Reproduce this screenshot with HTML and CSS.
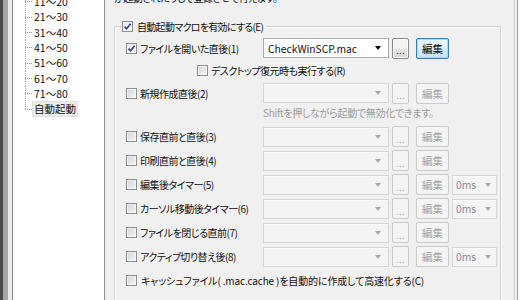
FILE: index.html
```html
<!DOCTYPE html>
<html lang="ja">
<head>
<meta charset="utf-8">
<title>自動起動</title>
<link rel="stylesheet" href="styles.css">
</head>
<body>
<div class="win">
  <div class="edge"></div>
  <div class="tree">
    <ul class="tree-list">
      <li class="ti"><span class="lbl">11～20</span></li>
      <li class="ti"><span class="lbl">21～30</span></li>
      <li class="ti"><span class="lbl">31～40</span></li>
      <li class="ti"><span class="lbl">41～50</span></li>
      <li class="ti"><span class="lbl">51～60</span></li>
      <li class="ti"><span class="lbl">61～70</span></li>
      <li class="ti"><span class="lbl">71～80</span></li>
      <li class="ti last"><span class="lbl sel">自動起動</span></li>
    </ul>
  </div>
  <div class="main">
    <div class="desc">が起動されたりして登録させて行えます。</div>
    <div class="group">
      <div class="legend"><span class="cb on"><svg viewBox="0 0 9 9" width="9" height="9"><path d="M1.5 4.6 L3.6 6.8 L7.6 1.8" /></svg></span><span>自動起動マクロを有効にする(E)</span></div>

      <div class="row r1">
        <div class="chk"><span class="cb on"><svg viewBox="0 0 9 9" width="9" height="9"><path d="M1.5 4.6 L3.6 6.8 L7.6 1.8" /></svg></span><span>ファイルを開いた直後(1)</span></div>
        <div class="combo en"><span class="ctext">CheckWinSCP.mac</span><span class="arr"></span></div>
        <div class="btn dots en">...</div>
        <div class="btn edit focus">編集</div>
      </div>

      <div class="row r2">
        <div class="chk sub"><span class="cb"></span><span>デスクトップ復元時も実行する(R)</span></div>
      </div>

      <div class="row">
        <div class="chk"><span class="cb"></span><span>新規作成直後(2)</span></div>
        <div class="combo"><span class="ctext"></span><span class="arr"></span></div>
        <div class="btn dots">...</div>
        <div class="btn edit">編集</div>
      </div>

      <div class="hint">Shiftを押しながら起動で無効化できます。</div>

      <div class="row">
        <div class="chk"><span class="cb"></span><span>保存直前と直後(3)</span></div>
        <div class="combo"><span class="ctext"></span><span class="arr"></span></div>
        <div class="btn dots">...</div>
        <div class="btn edit">編集</div>
      </div>

      <div class="row">
        <div class="chk"><span class="cb"></span><span>印刷直前と直後(4)</span></div>
        <div class="combo"><span class="ctext"></span><span class="arr"></span></div>
        <div class="btn dots">...</div>
        <div class="btn edit">編集</div>
      </div>

      <div class="row">
        <div class="chk"><span class="cb"></span><span>編集後タイマー(5)</span></div>
        <div class="combo"><span class="ctext"></span><span class="arr"></span></div>
        <div class="btn dots">...</div>
        <div class="btn edit">編集</div>
        <div class="combo ms"><span class="ctext">0ms</span><span class="arr"></span></div>
      </div>

      <div class="row">
        <div class="chk"><span class="cb"></span><span>カーソル移動後タイマー(6)</span></div>
        <div class="combo"><span class="ctext"></span><span class="arr"></span></div>
        <div class="btn dots">...</div>
        <div class="btn edit">編集</div>
        <div class="combo ms"><span class="ctext">0ms</span><span class="arr"></span></div>
      </div>

      <div class="row">
        <div class="chk"><span class="cb"></span><span>ファイルを閉じる直前(7)</span></div>
        <div class="combo"><span class="ctext"></span><span class="arr"></span></div>
        <div class="btn dots">...</div>
        <div class="btn edit">編集</div>
      </div>

      <div class="row">
        <div class="chk"><span class="cb"></span><span>アクティブ切り替え後(8)</span></div>
        <div class="combo"><span class="ctext"></span><span class="arr"></span></div>
        <div class="btn dots">...</div>
        <div class="btn edit">編集</div>
        <div class="combo ms"><span class="ctext">0ms</span><span class="arr"></span></div>
      </div>

      <div class="row">
        <div class="chk wide"><span class="cb"></span><span>キャッシュファイル( .mac.cache )を自動的に作成して高速化する(C)</span></div>
      </div>
    </div>
  </div>
  <div class="rside"></div>
</div>
</body>
</html>
```

FILE: styles.css
```css
html, body {
  margin: 0;
  padding: 0;
}
body {
  width: 520px;
  height: 300px;
  overflow: hidden;
  background: #f0f0f0;
  font-family: "Noto Sans CJK JP", "Noto Sans", sans-serif;
  font-size: 10px;
  letter-spacing: -0.5px;
  color: #111;
  font-feature-settings: "palt";
}
.win {
  display: flex;
  height: 300px;
}
.edge {
  flex: none;
  width: 12px;
  background: linear-gradient(to right, #4b4b4b 0 3px, #a6a6a6 3px 8px, #ebebeb 8px 12px);
}
.tree {
  flex: none;
  width: 93px;
  box-sizing: border-box;
  background: #fff;
  border-left: 1px solid #8a8f96;
  border-right: 1px solid #8a8f96;
  overflow: hidden;
}
.tree-list {
  list-style: none;
  margin: -5.7px 0 0 0;
  padding: 0;
  font-size: 10.5px;
  letter-spacing: 0;
}
.ti {
  height: 15.33px;
  display: flex;
  align-items: center;
  padding-left: 20px;
  background-image:
    repeating-linear-gradient(to bottom, #9a9a9a 0 1px, transparent 1px 2px),
    repeating-linear-gradient(to right, #9a9a9a 0 1px, transparent 1px 2px);
  background-size: 1px 100%, 7px 1px;
  background-position: 12px 0, 12px 50%;
  background-repeat: no-repeat;
}
.ti.last {
  background-size: 1px 50%, 7px 1px;
}
.lbl {
  line-height: 14px;
  padding: 0 1px;
}
.lbl.sel {
  background: #ececec;
  outline: 1px solid #e0e0e0;
}
.main {
  flex: none;
  width: 409px;
  box-sizing: border-box;
  padding-left: 9px;
}
.desc {
  height: 14px;
  line-height: 14px;
  margin-top: -9px;
  white-space: nowrap;
}
.group {
  margin-top: 21px;
  width: 387px;
  height: 275px;
  box-sizing: border-box;
  border: 1px solid #d0d0d0;
  box-shadow: inset 1px 1px 0 #fff, 1px 1px 0 #fff;
  padding-left: 11px;
}
.legend {
  display: flex;
  width: max-content;
  align-items: center;
  gap: 4px;
  height: 14px;
  margin-top: -8px;
  margin-left: -4px;
  padding-right: 3px;
  background: #f0f0f0;
  white-space: nowrap;
  letter-spacing: -0.7px;
}
.cb {
  flex: none;
  width: 11px;
  height: 11px;
  box-sizing: border-box;
  border: 1px solid #8e8f8f;
  background: linear-gradient(135deg, #d2d4d6, #f6f6f6);
  box-shadow: inset 0 0 0 1px #f3f3f3;
  display: flex;
  align-items: center;
  justify-content: center;
}
.cb.on {
  background: linear-gradient(135deg, #e3e6ea, #fbfbfb);
}
.cb svg path {
  fill: none;
  stroke: #3a4c7c;
  stroke-width: 1.7;
}
.row {
  display: flex;
  align-items: center;
  height: 24px;
}
.row.r1 {
  margin-top: 4px;
  height: 22px;
}
.row.r2 {
  height: 22px;
}
.chk {
  flex: none;
  width: 137px;
  display: flex;
  align-items: center;
  gap: 3px;
  white-space: nowrap;
}
.chk.sub {
  padding-left: 71px;
  width: auto;
}
.chk.wide {
  width: auto;
  gap: 4px;
  letter-spacing: -0.15px;
}
.hint {
  height: 16px;
  line-height: 16px;
  margin-bottom: 3.5px;
  padding-left: 137px;
  color: #9c9c9c;
  white-space: nowrap;
  letter-spacing: -0.3px;
}
.combo {
  flex: none;
  width: 126px;
  height: 20px;
  box-sizing: border-box;
  border: 1px solid #d5d5d5;
  background: #f4f4f4;
  box-shadow: inset 0 1px 0 #fbfbfb;
  display: flex;
  align-items: center;
  padding-left: 4px;
  letter-spacing: 0;
  font-size: 10.3px;
}
.combo.en {
  border-color: #abadb3;
  background: #fff;
  box-shadow: none;
}
.ctext {
  flex: 1;
  white-space: nowrap;
  overflow: hidden;
}
.arr {
  flex: none;
  width: 0;
  height: 0;
  border-left: 3px solid transparent;
  border-right: 3px solid transparent;
  border-top: 4px solid #a9a9a9;
  margin-right: 7px;
}
.combo.en .arr {
  border-top-color: #000;
}
.combo.ms {
  width: 45px;
  margin-left: 3px;
  padding-left: 3px;
  color: #8a8a8a;
}
.combo.ms .arr {
  margin-right: 5px;
}
.btn {
  flex: none;
  height: 21px;
  box-sizing: border-box;
  border: 1px solid #cacaca;
  border-radius: 2px;
  background: #f4f4f4;
  color: #a3a3a3;
  display: flex;
  align-items: center;
  justify-content: center;
  font-size: 10.5px;
  letter-spacing: 0;
}
.dots {
  width: 17px;
  margin-left: 3px;
  font-size: 10px;
  line-height: 1;
  padding-top: 4px;
}
.dots.en {
  border-color: #8a8a8a;
  background: linear-gradient(#f3f3f3 0 45%, #e4e4e4 55%, #d6d6d6 100%);
  box-shadow: inset 0 0 0 1px #fafafa;
  color: #333;
}
.edit {
  width: 33px;
  margin-left: 7px;
}
.edit.focus {
  border-color: #3c7fb1;
  background: linear-gradient(#e6f3fb 0 45%, #d3ebf8 55%, #c3e3f6 100%);
  box-shadow: inset 0 0 0 1px #9fdcf8;
  color: #000;
}
.rside {
  flex: none;
  width: 6px;
  background: linear-gradient(to right, #c9c9c9 0 1px, #f0f0f0 1px 3px, #9c9c9c 3px 4px, #f8f8f8 4px);
}
```
